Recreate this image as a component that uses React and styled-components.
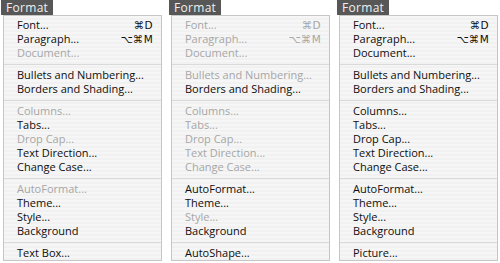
import React from 'react'
import styled, { createGlobalStyle } from 'styled-components'

const GlobalStyle = createGlobalStyle`
  html, body {
    margin: 0;
    padding: 0;
    background: #ffffff;
  }
  body {
    font-family: 'Open Sans', 'Noto Sans', 'Liberation Sans', sans-serif;
  }
`

const Page = styled.div`
  display: flex;
  gap: 9px;
  padding-left: 3px;
  width: 500px;
  height: 263px;
  box-sizing: border-box;
  overflow: hidden;
`

const MenuColumn = styled.div`
  display: flex;
  flex-direction: column;
  width: 159px;
`

const MenuTitle = styled.div`
  align-self: flex-start;
  margin-left: -2px;
  height: 15px;
  padding: 0 5px 0 5px;
  background: #575757;
  color: #f0f0f0;
  font-size: 12px;
  line-height: 15px;
  letter-spacing: 0.3px;
`

const MenuBody = styled.div`
  display: flex;
  flex-direction: column;
  border: 1px solid #c6c6c6;
  padding: 2px 0 0;
  background: repeating-linear-gradient(
    to bottom,
    #f6f6f6 0px,
    #f6f6f6 2px,
    #f1f1f1 2px,
    #f1f1f1 4px
  );
`

const Item = styled.div`
  display: flex;
  justify-content: space-between;
  align-items: center;
  height: 14px;
  padding: 0 8px 0 13px;
  font-size: 11px;
  font-weight: 500;
  line-height: 14px;
  color: ${props => (props.$disabled ? '#a6a6a6' : '#0e0e0e')};
  white-space: nowrap;
`

const Shortcut = styled.span`
  font-family: 'DejaVu Sans', sans-serif;
  font-size: 10.5px;
  font-weight: 400;
  letter-spacing: 0.3px;
`

const Separator = styled.div`
  height: 8px;
  display: flex;
  align-items: center;
  &::after {
    content: '';
    flex: 1;
    height: 1px;
    background: #dadada;
  }
`

const menus = [
  {
    disabled: ['Document...', 'Columns...', 'Drop Cap...', 'AutoFormat...'],
    last: 'Text Box...'
  },
  {
    disabled: [
      'Font...',
      'Paragraph...',
      'Document...',
      'Bullets and Numbering...',
      'Columns...',
      'Tabs...',
      'Drop Cap...',
      'Text Direction...',
      'Change Case...',
      'Style...'
    ],
    last: 'AutoShape...'
  },
  {
    disabled: [],
    last: 'Picture...'
  }
]

const groups = last => [
  [
    { label: 'Font...', key: '⌘D' },
    { label: 'Paragraph...', key: '⌥⌘M' },
    { label: 'Document...' }
  ],
  [{ label: 'Bullets and Numbering...' }, { label: 'Borders and Shading...' }],
  [
    { label: 'Columns...' },
    { label: 'Tabs...' },
    { label: 'Drop Cap...' },
    { label: 'Text Direction...' },
    { label: 'Change Case...' }
  ],
  [
    { label: 'AutoFormat...' },
    { label: 'Theme...' },
    { label: 'Style...' },
    { label: 'Background' }
  ],
  [{ label: last }]
]

const FormatMenu = ({ disabled, last }) => (
  <MenuColumn>
    <MenuTitle>Format</MenuTitle>
    <MenuBody>
      {groups(last).map((group, gi) => (
        <React.Fragment key={gi}>
          {gi > 0 && <Separator />}
          {group.map(item => (
            <Item key={item.label} $disabled={disabled.includes(item.label)}>
              <span>{item.label}</span>
              {item.key && <Shortcut>{item.key}</Shortcut>}
            </Item>
          ))}
        </React.Fragment>
      ))}
    </MenuBody>
  </MenuColumn>
)

export default function App() {
  return (
    <>
      <GlobalStyle />
      <Page>
        {menus.map((m, i) => (
          <FormatMenu key={i} disabled={m.disabled} last={m.last} />
        ))}
      </Page>
    </>
  )
}
